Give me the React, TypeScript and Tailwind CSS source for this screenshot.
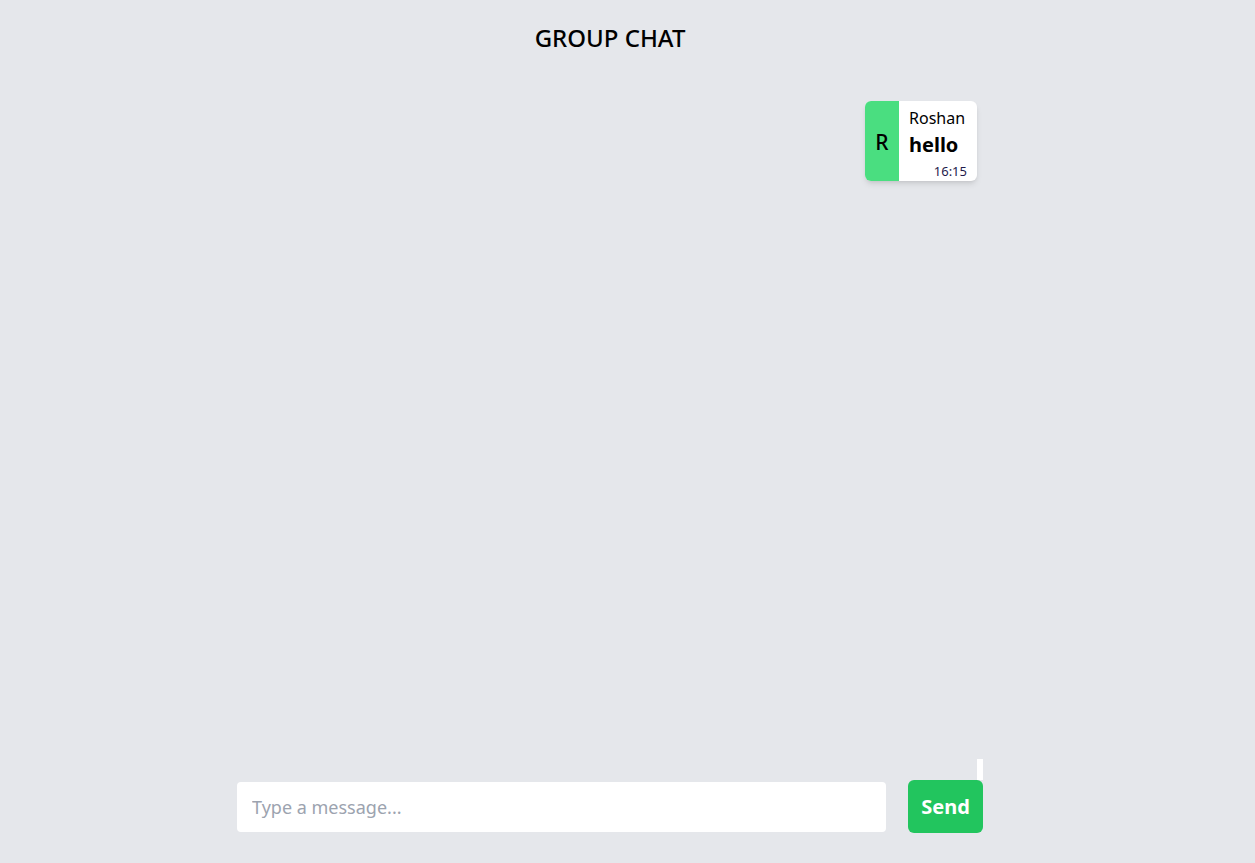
export default function App() {
  return (
    <main
      className="flex h-screen w-full justify-center bg-[#e5e7eb] pr-[35px]"
      style={{ fontFamily: '"Noto Sans", "Open Sans", sans-serif' }}
    >
      <div className="flex h-full w-[746px] flex-col">
        {/* Header */}
        <h1 className="pt-[22px] text-center text-[24px] leading-[32px] font-medium text-black">
          GROUP CHAT
        </h1>

        {/* Messages */}
        <div className="flex flex-1 flex-col items-end pt-[47px] pr-[6px]">
          <div className="flex h-[80px] overflow-hidden rounded-md bg-white shadow-md">
            <div className="flex w-[34px] items-center justify-center bg-[#4ade80] pt-[4px] text-[21px] font-medium text-black">
              R
            </div>
            <div className="flex w-[78px] flex-col pl-[10px] pr-[10px]">
              <span className="pt-[4px] text-[16px] leading-[26px] text-black">Roshan</span>
              <span className="text-[20px] leading-[28px] font-bold text-black">hello</span>
              <span className="mt-[3px] self-end text-[13px] leading-[18px] text-[#1e1b4b]">16:15</span>
            </div>
          </div>
        </div>

        {/* Input row */}
        <div className="flex flex-col items-end pb-[30px]">
          <div className="h-[21px] w-[6px] bg-white" />
          <div className="flex w-full items-center gap-[22px]">
            <input
              type="text"
              placeholder="Type a message..."
              className="h-[50px] flex-1 rounded-[4px] bg-white px-[15px] text-[18px] text-black outline-none placeholder:text-[#9ca3af]"
            />
            <button className="h-[53px] w-[75px] rounded-md bg-[#22c55e] text-[20px] font-bold text-white">
              Send
            </button>
          </div>
        </div>
      </div>
    </main>
  )
}
